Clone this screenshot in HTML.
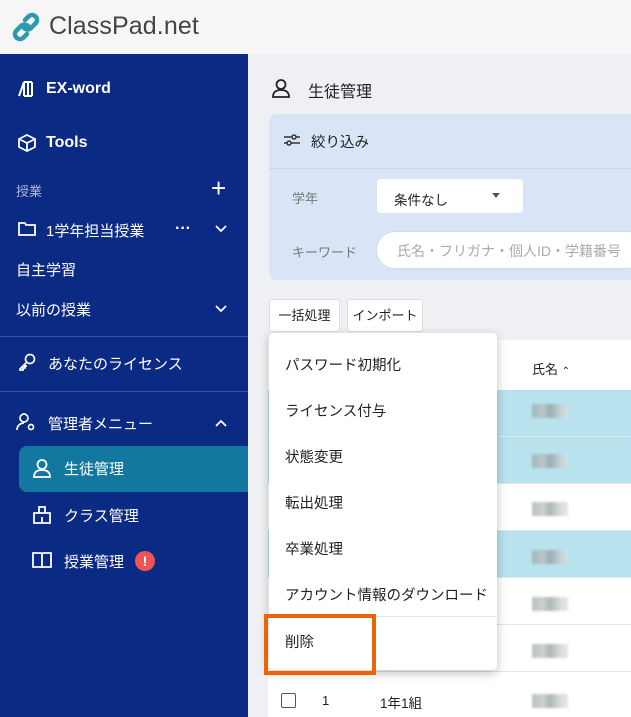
<!DOCTYPE html>
<html><head><meta charset="utf-8"><style>
*{margin:0;padding:0;box-sizing:border-box}
body{width:631px;height:717px;overflow:hidden;background:#eef0f3;font-family:"Liberation Sans","Noto Sans CJK JP",sans-serif;position:relative}
.abs{position:absolute}
#hdr{left:0;top:0;width:631px;height:54px;background:#f6f6f7}
#side{left:0;top:54px;width:248px;height:663px;background:#0b2a84;color:#fff}
.si{position:absolute;font-size:15px;color:#fff;white-space:nowrap}
.sep{position:absolute;left:0;width:248px;height:1px;background:#3553a8}
.row{position:absolute;left:268px;width:363px;height:47px;border-bottom:1px solid #e3e6ea}
.blur{position:absolute;left:532px;width:36px;height:14px;background:linear-gradient(90deg,#9aa 0,#bbb 30%,#8a9a9a 50%,#ccc 80%,#ddd 100%);opacity:.7;filter:blur(1px)}
.mi{position:absolute;left:285px;font-size:14.5px;color:#222;white-space:nowrap}
</style></head><body>
<div id="hdr" class="abs">
 <svg class="abs" style="left:11px;top:12px" width="30" height="30" viewBox="0 0 30 30"><g fill="none" stroke="#2b9aab" stroke-width="4.5" stroke-linecap="round"><path d="M14 8l4-4a5 5 0 0 1 7 7l-5 5a5 5 0 0 1-7 0"/><path d="M16 22l-4 4a5 5 0 0 1-7-7l5-5a5 5 0 0 1 7 0"/></g></svg>
 <div class="abs" style="left:49px;top:12px;font-size:25px;color:#444;letter-spacing:.1px">ClassPad.net</div>
</div>
<div id="side" class="abs">
 <svg class="abs" style="left:17px;top:27px" width="20" height="16" viewBox="0 0 20 16" fill="none" stroke="#fff" stroke-width="2"><path d="M2 15L7 1M7 1v14M11 1v14M15 1v14M7 1h8M7 15h8"/></svg>
 <div class="si" style="left:46px;top:26px;font-weight:bold;font-size:16px">EX-word</div>
 <svg class="abs" style="left:17px;top:80px" width="20" height="18" viewBox="0 0 20 18" fill="none" stroke="#fff" stroke-width="1.8"><path d="M10 1l8 4v8l-8 4-8-4V5z M2 5l8 4 8-4M10 9v8"/></svg>
 <div class="si" style="left:46px;top:80px;font-weight:bold;font-size:16px">Tools</div>
 <div class="si" style="left:16px;top:127px;font-size:13px;color:#aeb7d8">授業</div>
 <div class="si" style="left:211px;top:119px;font-size:26px;font-weight:200">+</div>
 <svg class="abs" style="left:18px;top:168px" width="18" height="14" viewBox="0 0 18 14" fill="none" stroke="#fff" stroke-width="1.8"><path d="M1 1h6l1 2h9v10H1z"/></svg>
 <div class="si" style="left:46px;top:166px">1学年担当授業</div>
 <div class="si" style="left:175px;top:166px;font-size:16px;font-weight:bold">···</div>
 <svg class="abs" style="left:215px;top:171px" width="12" height="8" viewBox="0 0 12 8" fill="none" stroke="#fff" stroke-width="1.8"><path d="M1 1l5 5 5-5"/></svg>
 <div class="si" style="left:16px;top:205px">自主学習</div>
 <div class="si" style="left:16px;top:245px">以前の授業</div>
 <svg class="abs" style="left:215px;top:251px" width="12" height="8" viewBox="0 0 12 8" fill="none" stroke="#fff" stroke-width="1.8"><path d="M1 1l5 5 5-5"/></svg>
 <div class="sep" style="top:282px"></div>
 <svg class="abs" style="left:18px;top:299px" width="18" height="18" viewBox="0 0 18 18" fill="none" stroke="#fff" stroke-width="1.7"><circle cx="12" cy="6" r="4.5"/><path d="M9 9l-7 7v1h3v-2h2v-2h2"/></svg>
 <div class="si" style="left:48px;top:299px">あなたのライセンス</div>
 <div class="sep" style="top:337px"></div>
 <svg class="abs" style="left:16px;top:359px" width="20" height="18" viewBox="0 0 20 18" fill="none" stroke="#fff" stroke-width="1.7"><circle cx="8" cy="5" r="4"/><path d="M1 17c0-4 3-7 7-7"/><circle cx="15" cy="14" r="2.5"/></svg>
 <div class="si" style="left:48px;top:359px">管理者メニュー</div>
 <svg class="abs" style="left:215px;top:365px" width="12" height="8" viewBox="0 0 12 8" fill="none" stroke="#fff" stroke-width="1.8"><path d="M1 7l5-5 5 5"/></svg>
 <div class="abs" style="left:19px;top:392px;width:229px;height:46px;background:#13789f;border-radius:8px 0 0 8px"></div>
 <svg class="abs" style="left:33px;top:405px" width="18" height="19" viewBox="0 0 18 19" fill="none" stroke="#fff" stroke-width="1.8"><circle cx="9" cy="5.5" r="4.5"/><path d="M1 18c0-5 3-7 8-7s8 2 8 7z"/></svg>
 <div class="si" style="left:64px;top:404px">生徒管理</div>
 <svg class="abs" style="left:33px;top:452px" width="18" height="18" viewBox="0 0 18 18" fill="none" stroke="#fff" stroke-width="1.8"><path d="M6 1h6v6h5v10H1V7h5zM6 7h6M9 11v6"/></svg>
 <div class="si" style="left:64px;top:451px">クラス管理</div>
 <svg class="abs" style="left:32px;top:498px" width="20" height="16" viewBox="0 0 20 16" fill="none" stroke="#fff" stroke-width="1.8"><path d="M1 1h8l1 1 1-1h8v14h-8l-1 1-1-1H1zM10 2v13"/></svg>
 <div class="si" style="left:64px;top:497px">授業管理</div>
 <div class="abs" style="left:135px;top:497px;width:20px;height:20px;border-radius:50%;background:#ef5353;color:#fff;font-size:14px;font-weight:bold;text-align:center;line-height:20px">!</div>
</div>
<svg class="abs" style="left:272px;top:79px" width="18" height="19" viewBox="0 0 18 19" fill="none" stroke="#222" stroke-width="1.8"><circle cx="9" cy="5.5" r="4.5"/><path d="M1 18c0-5 3-7 8-7s8 2 8 7z"/></svg>
<div class="abs" style="left:308px;top:78px;font-size:16px;color:#222">生徒管理</div>
<div class="abs" style="left:269px;top:114px;width:362px;height:166px;background:#d9e4f7;border-radius:8px 0 0 8px"></div>
<div class="abs" style="left:269px;top:168px;width:362px;height:1px;background:#c8d5ee"></div>
<svg class="abs" style="left:284px;top:133px" width="16" height="14" viewBox="0 0 16 14" fill="none" stroke="#333" stroke-width="1.5"><path d="M0 4h16M0 10h16"/><circle cx="10" cy="4" r="2" fill="#d9e4f7"/><circle cx="5" cy="10" r="2" fill="#d9e4f7"/></svg>
<div class="abs" style="left:311px;top:131px;font-size:14.5px;color:#222">絞り込み</div>
<div class="abs" style="left:292px;top:188px;font-size:13px;color:#777">学年</div>
<div class="abs" style="left:377px;top:179px;width:146px;height:34px;background:#fff;border-radius:4px"></div>
<div class="abs" style="left:394px;top:189px;font-size:13.5px;color:#222">条件なし</div>
<div class="abs" style="left:492px;top:193px;width:0;height:0;border-left:4px solid transparent;border-right:4px solid transparent;border-top:5px solid #555"></div>
<div class="abs" style="left:292px;top:242px;font-size:13px;color:#777">キーワード</div>
<div class="abs" style="left:376px;top:231px;width:270px;height:38px;background:#fff;border:1px solid #d5dbe5;border-radius:19px"></div>
<div class="abs" style="left:397px;top:241px;font-size:14px;color:#aaa;white-space:nowrap">氏名・フリガナ・個人ID・学籍番号</div>
<div class="abs" style="left:269px;top:299px;width:71px;height:33px;background:#fff;border:1px solid #ddd;border-radius:3px;font-size:13px;line-height:31px;text-align:center;color:#222">一括処理</div>
<div class="abs" style="left:347px;top:299px;width:76px;height:33px;background:#fff;border:1px solid #ddd;border-radius:3px;font-size:13px;line-height:31px;text-align:center;color:#222">インポート</div>
<div class="abs" style="left:268px;top:340px;width:363px;height:377px;background:#fff"></div>
<div class="abs" style="left:532px;top:359px;font-size:13px;color:#222">氏名 <span style="font-size:10px">⌃</span></div>
<div class="row" style="top:390px;background:#b8e2ee"></div>
<div class="row" style="top:437px;background:#b8e2ee"></div>
<div class="row" style="top:484px"></div>
<div class="row" style="top:531px;background:#b8e2ee"></div>
<div class="row" style="top:578px"></div>
<div class="row" style="top:625px"></div>
<div class="blur" style="top:404px"></div><div class="blur" style="top:454px"></div><div class="blur" style="top:502px"></div><div class="blur" style="top:550px"></div><div class="blur" style="top:597px"></div><div class="blur" style="top:644px"></div><div class="blur" style="top:694px"></div>
<div class="abs" style="left:281px;top:693px;width:15px;height:15px;border:1.5px solid #555;border-radius:2px"></div>
<div class="abs" style="left:322px;top:693px;font-size:13px;color:#222">1</div>
<div class="abs" style="left:380px;top:692px;font-size:13.5px;color:#222">1年1組</div>
<div class="abs" style="left:269px;top:333px;width:228px;height:337px;background:#fff;border-radius:4px;box-shadow:0 3px 10px rgba(0,0,0,.25)"></div>
<div class="abs" style="left:269px;top:616px;width:228px;height:1px;background:#e6e6e6"></div>
<div class="mi" style="top:354px">パスワード初期化</div>
<div class="mi" style="top:400px">ライセンス付与</div>
<div class="mi" style="top:446px">状態変更</div>
<div class="mi" style="top:492px">転出処理</div>
<div class="mi" style="top:538px">卒業処理</div>
<div class="mi" style="top:584px">アカウント情報のダウンロード</div>
<div class="mi" style="top:631px">削除</div>
<div class="abs" style="left:264px;top:614px;width:112px;height:61px;border:4px solid #e8650a"></div>
</body></html>
